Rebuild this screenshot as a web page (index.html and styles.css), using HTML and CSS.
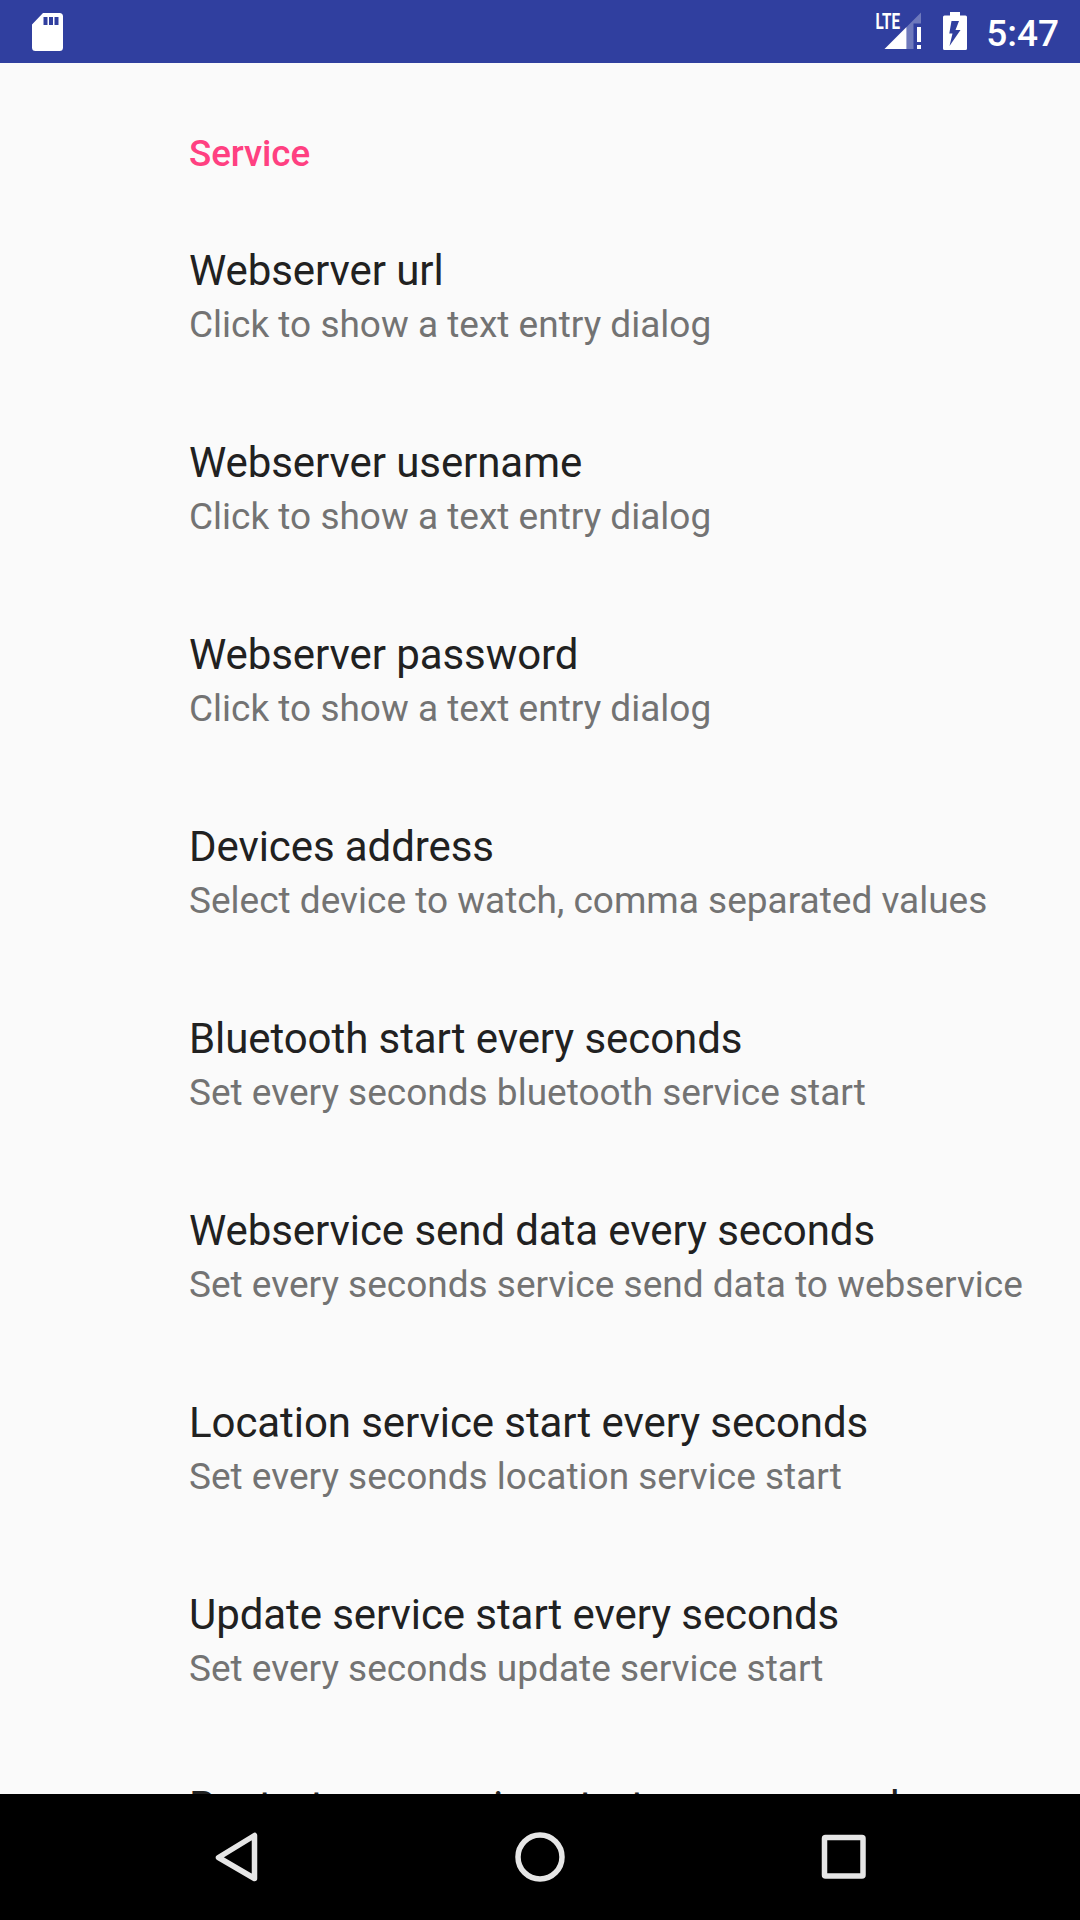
FILE: index.html
```html
<!DOCTYPE html>
<html lang="en">
<head>
<meta charset="utf-8">
<title>Settings</title>
<link rel="stylesheet" href="styles.css">
</head>
<body>
<header class="status">
  <svg class="sd" width="31" height="38" viewBox="0 0 31 38"><path fill="#fff" fill-rule="evenodd" d="M11 0H27.500a3.500 3.500 0 0 1 3.500 3.500V34.500a3.500 3.500 0 0 1-3.500 3.500H3.500a3.500 3.500 0 0 1-3.500-3.500V11.500ZM11.500 4v8h4V4ZM17 4v8h4V4ZM22.500 4v8h4V4Z"/></svg>
  <div class="tray">
    <svg class="signal" width="46" height="38" viewBox="0 0 46 38">
      <g fill="#fff">
        <text class="network" x="-0.500" y="17" textLength="24.500" lengthAdjust="spacingAndGlyphs">LTE</text>
        <path d="M8.500 37 30.500 15V37Z"/>
        <path d="M41 15h4v15h-4ZM41 33h4v4h-4Z"/>
        <path fill-opacity=".3" d="M30.500 15 45 .5V11.500H37.500V37H30.500Z"/>
      </g>
    </svg>
    <svg class="battery" width="24" height="38" viewBox="0 0 24 38"><path fill="#fff" fill-rule="evenodd" d="M7 0H17V3.500H22.500A1.500 1.500 0 0 1 24 5V36.500A1.500 1.500 0 0 1 22.500 38H1.500A1.500 1.500 0 0 1 0 36.500V5A1.500 1.500 0 0 1 1.500 3.500H7ZM8.500 9 6.300 21.500H9.500L6.500 34 17.500 18H12.500L16 9Z"/></svg>
    <span class="time">5:47</span>
  </div>
</header>
<main class="list">
  <h2 class="category">Service</h2>
  <section class="pref"><h3>Webserver url</h3><p>Click to show a text entry dialog</p></section>
  <section class="pref"><h3>Webserver username</h3><p>Click to show a text entry dialog</p></section>
  <section class="pref"><h3>Webserver password</h3><p>Click to show a text entry dialog</p></section>
  <section class="pref"><h3>Devices address</h3><p>Select device to watch, comma separated values</p></section>
  <section class="pref"><h3>Bluetooth start every seconds</h3><p>Set every seconds bluetooth service start</p></section>
  <section class="pref"><h3>Webservice send data every seconds</h3><p>Set every seconds service send data to webservice</p></section>
  <section class="pref"><h3>Location service start every seconds</h3><p>Set every seconds location service start</p></section>
  <section class="pref"><h3>Update service start every seconds</h3><p>Set every seconds update service start</p></section>
  <section class="pref"><h3>Restart app service start every seconds</h3></section>
</main>
<footer class="nav">
  <svg width="60" height="60" viewBox="0 0 60 60"><path d="M48.500 8.500V51.500L12.500 30.500Z"/></svg>
  <svg width="60" height="60" viewBox="0 0 60 60"><circle cx="30" cy="30" r="22"/></svg>
  <svg width="60" height="60" viewBox="0 0 60 60"><rect x="10.500" y="10.500" width="38.500" height="38.500" rx="1"/></svg>
</footer>
</body>
</html>
```
FILE: styles.css
```css
* { box-sizing: border-box; margin: 0; padding: 0; }
body { width: 1080px; height: 1920px; overflow: hidden; display: flex; flex-direction: column; background: #fafafa; font-family: Roboto, sans-serif; }
.status { height: 63px; flex: none; background: #303f9f; display: flex; align-items: center; justify-content: space-between; padding: 0 21px 0 32px; }
.tray { display: flex; align-items: flex-start; height: 39px; }
.signal { margin-right: 21px; overflow: visible; }
.network { font-size: 21.500px; font-weight: 700; }
.battery { margin-right: 19px; }
.time { color: #fff; font-size: 37px; line-height: 44px; font-weight: 500; }
.list { flex: 1; min-height: 0; overflow: hidden; padding: 49px 0 0 189px; }
.category { height: 83px; line-height: 84px; font-size: 36.75px; font-weight: 500; letter-spacing: -0.1px; color: #ff4081; }
.pref { height: 192px; padding-top: 48px; white-space: nowrap; }
.pref h3 { font-size: 42px; line-height: 56px; font-weight: 400; letter-spacing: -0.08px; color: #212121; }
.pref p { font-size: 37px; line-height: 51px; color: #737373; }
.nav { height: 126px; flex: none; background: #000; display: flex; align-items: center; justify-content: center; gap: 244px; }
.nav svg { fill: none; stroke: #e6e6e6; stroke-width: 5.500; stroke-linejoin: round; }
```
